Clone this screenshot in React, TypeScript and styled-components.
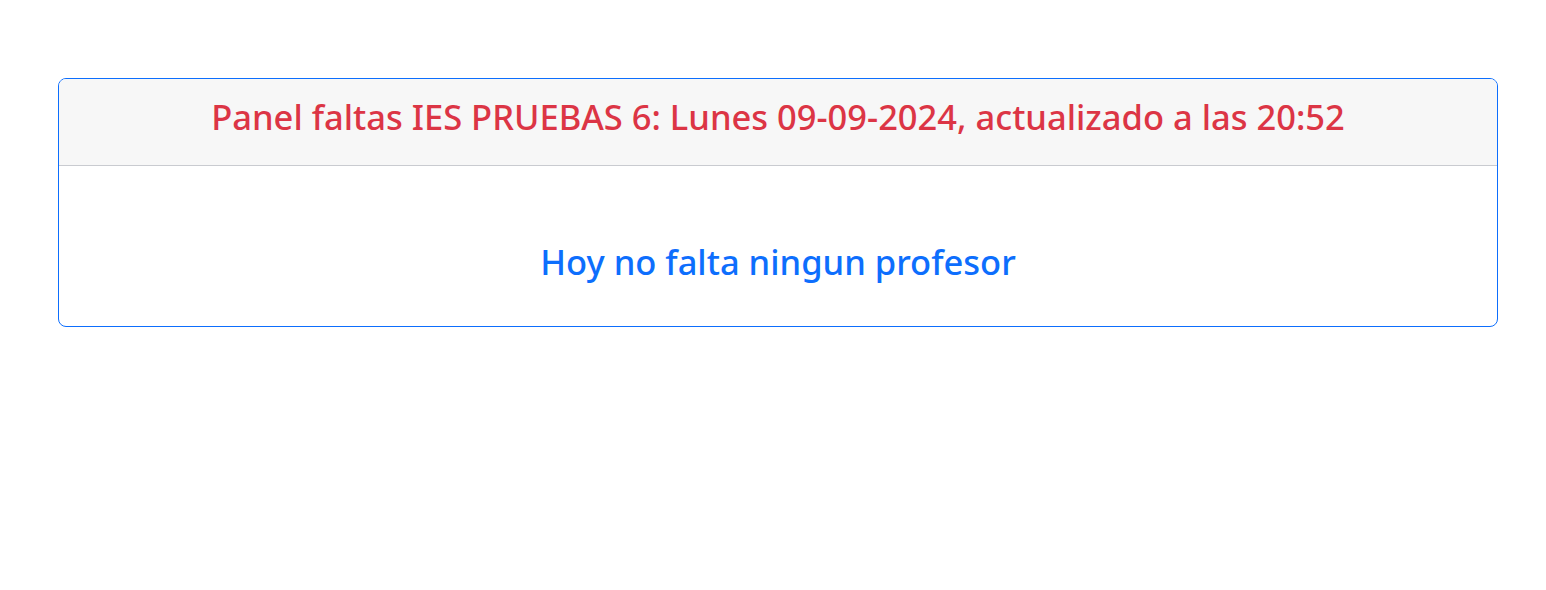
import styled, { createGlobalStyle } from 'styled-components';

const GlobalStyle = createGlobalStyle`
  body {
    margin: 0;
    background: #fff;
    font-family: "Noto Sans", "Open Sans", sans-serif;
  }
`;

const Page = styled.div`
  padding: 78px 48px 0 58px;
`;

const Card = styled.div`
  border: 1px solid #0d6efd;
  border-radius: 8px;
  overflow: hidden;
  background: #fff;
`;

const CardHeader = styled.div`
  height: 87px;
  display: flex;
  align-items: center;
  justify-content: center;
  padding-bottom: 10px;
  box-sizing: border-box;
  background: #f7f7f7;
  border-bottom: 1px solid #c9cbd0;
`;

const Title = styled.h2<{ $color: string }>`
  margin: 0;
  font-size: 34.5px;
  font-weight: 500;
  line-height: 1.2;
  color: ${(p) => p.$color};
`;

const CardBody = styled.div`
  height: 160px;
  display: flex;
  align-items: center;
  justify-content: center;
  padding-top: 32px;
  box-sizing: border-box;
`;

export default function App() {
  return (
    <>
      <GlobalStyle />
      <Page>
        <Card>
          <CardHeader>
            <Title $color="#dc3545">
              Panel faltas IES PRUEBAS 6: Lunes 09-09-2024, actualizado a las 20:52
            </Title>
          </CardHeader>
          <CardBody>
            <Title $color="#0d6efd">Hoy no falta ningun profesor</Title>
          </CardBody>
        </Card>
      </Page>
    </>
  );
}
